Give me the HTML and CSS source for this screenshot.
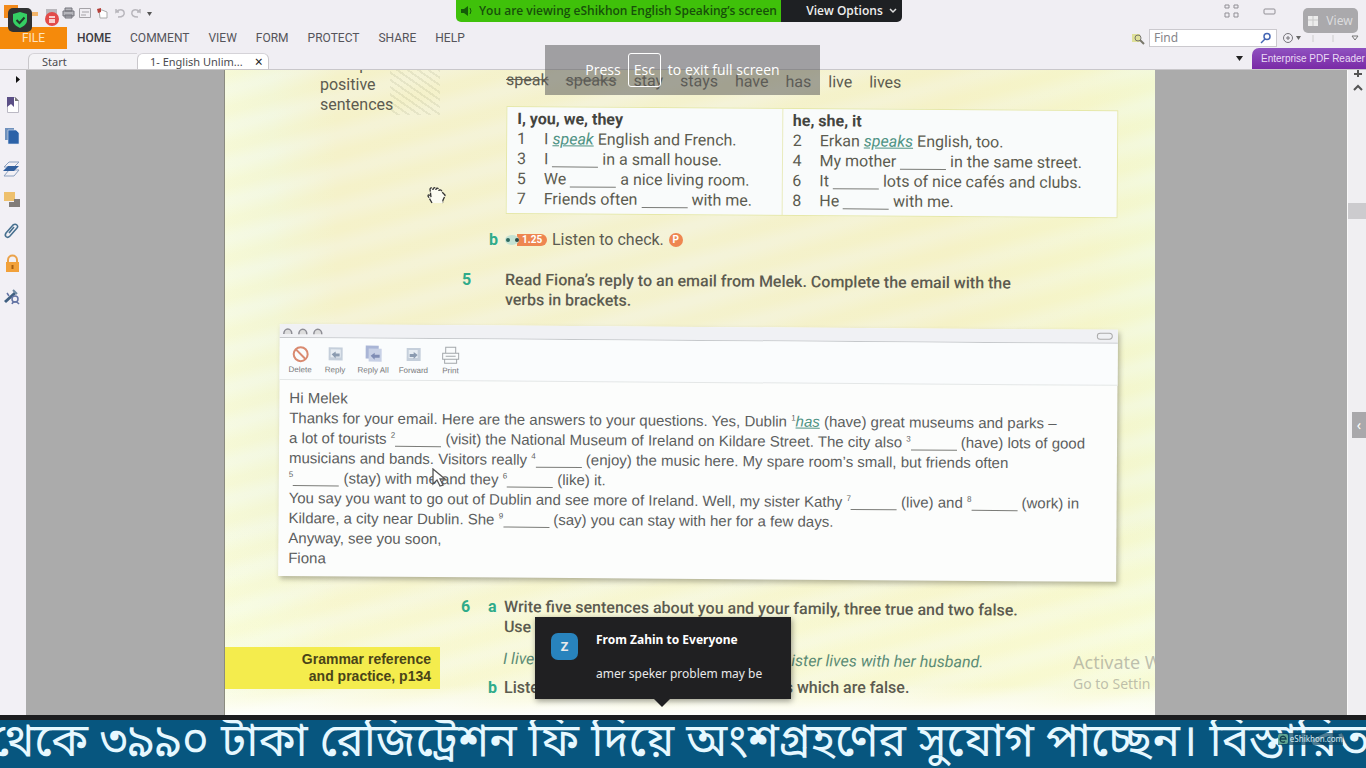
FILE: index.html
```html
<!DOCTYPE html>
<html lang="en">
<head>
<meta charset="utf-8">
<title>English Unlimited - PDF Reader</title>
<link rel="stylesheet" href="styles.css">
</head>
<body>
<header class="app-bar">
  <div class="quick">
    <svg class="quick-icons" width="156" height="26" viewBox="0 0 156 26" fill="none">
      <path d="M4 5h14v13H4z" fill="#f28a1c"/><path d="M32 12h6v4h-6z" fill="#f3b56b"/>
      <path d="M46 9h11v8H46z" fill="#b9b7bc"/><path d="M65 11h7V8h-7zM63 11h11v5H63zM65 15h7v3h-7z" stroke="#75757c" fill="#b5b5bb"/>
      <path d="M79.500 8.500h11v9h-11z" stroke="#a5a3a8"/><path d="M82 12h7M81 15h5" stroke="#a5a3a8"/>
      <path d="M99 10h3l5 2v6h-7z" stroke="#aaa" fill="#fff"/><path d="M97 9l4-1v4l-3 1z" fill="#b5403a"/>
      <path d="M118 17c5 0 7-2 6-5s-5-3-8 0v-3M116 12h3" stroke="#b8b6bc" stroke-width="1.500"/>
      <path d="M138 17c-5 0-7-2-6-5s5-3 8 0v-3M140 12h-3" stroke="#b8b6bc" stroke-width="1.500"/>
      <path d="M147 12h5l-2.500 4z" fill="#555"/>
    </svg>
    <svg class="window-icons" width="150" height="26" viewBox="0 0 150 26" fill="none" stroke="#918f95">
      <path d="M9 5h4v3H9zM18 5h4v3h-4zM9 13h4v4H9zM18 13h4v4h-4z"/><rect x="48" y="9" width="11" height="5" rx="1"/>
    </svg>
  </div>
  <div class="menu-row">
    <nav class="menu">
      <button class="file">FILE</button>
      <button class="current">HOME</button><button>COMMENT</button><button>VIEW</button><button>FORM</button><button>PROTECT</button><button>SHARE</button><button>HELP</button>
    </nav>
    <div class="search">
      <svg width="14" height="16" viewBox="0 0 14 16" fill="none"><path d="M1 4h8v8H1z" fill="#dfe09a"/><circle cx="7" cy="8" r="3" stroke="#77766a"/><path d="M9 10l4 4" stroke="#77766a" stroke-width="2"/></svg>
      <label class="find"><input type="text" placeholder="Find" aria-label="Find">
        <svg width="12" height="12" viewBox="0 0 12 12" fill="none" stroke="#4466b4" stroke-width="1.500"><circle cx="7" cy="4.500" r="3"/><path d="M5 7L1 11"/></svg></label>
      <svg width="85" height="16" viewBox="0 0 85 16" fill="none"><circle cx="7" cy="8" r="4.500" stroke="#77757b"/><path d="M5 8h4M7 6v4" stroke="#77757b"/><path d="M15 6h5l-2.500 4z" fill="#666"/><path d="M32 5v7M52 5v7" stroke="#ccc"/><path d="M71 6h6l-3 4z" stroke="#777"/></svg>
    </div>
  </div>
  <div class="tab-row">
    <button class="tab">Start</button>
    <button class="tab active"><span>1- English Unlim...</span><span class="close">×</span></button>
    <svg class="drop" width="8" height="6" viewBox="0 0 8 6"><path d="M0 0h7L3.500 5z" fill="#222"/></svg>
    <a class="edition" href="#">Enterprise PDF Reader</a>
  </div>
</header>

<main class="work">
  <aside class="tools">
    <svg width="26" height="240" viewBox="0 0 26 240" fill="none">
      <path d="M16 6l4 3.500-4 3.500z" fill="#111"/>
      <path d="M7.500 27.500h8l3 3v12h-11z" fill="#fff" stroke="#bbb9c4"/><path d="M7 27h7v10l-3-3-4 3z" fill="#5b4f86"/><path d="M15 27l4 4h-4z" fill="#777"/>
      <path d="M5 58h9v12H5z" fill="#6f91bd"/><path d="M8 60h8l3 3v11H8z" fill="#2c62a8" stroke="#dfe8f3" stroke-width=".6"/>
      <path d="M9 92h10l-5 5H4zM9 100h10l-5 6H4z" stroke="#8ba0bf"/><path d="M8 96h11l-5 5H3z" fill="#315f9e"/>
      <path d="M4 122h11v9H4z" fill="#eec06d"/><path d="M14 129h6v8H9v-5h5z" fill="#827d79"/>
      <path d="M6 163l7-8c3-2 6 1 4 3l-7 8c-3 3-6 0-4-3zm3 0l5-6" stroke="#47708f" stroke-width="1.600"/>
      <path d="M8 193v-3c0-6 9-6 9 0v3" stroke="#eaa24a" stroke-width="2"/><path d="M6 192h13v10H6z" fill="#f2a13a"/><path d="M12.500 195v4" stroke="#a85f10" stroke-width="2"/>
      <path d="M5 232l10-9" stroke="#3f5f80" stroke-width="3"/><path d="M13 220l4 4" stroke="#6d88a2" stroke-width="2"/><circle cx="15" cy="229" r="3" stroke="#6474a4" stroke-width="1.500"/><path d="M9 226l-2-3M12 234c1-3 5-3 7 0" stroke="#6474a4" stroke-width="1.500"/>
    </svg>
  </aside>
  <div class="canvas">
    <article class="paper">
      <section class="top">
        <p class="note">examples<br>positive<br>sentences</p>
        <div class="words tilt"><s>speak</s><s>speaks</s><span>stay</span><span>stays</span><span>have</span><span>has</span><span>live</span><span>lives</span></div>
      </section>
      <section class="verbs tilt">
        <div class="verb-col">
          <h2>I, you, we, they</h2>
          <ol>
            <li><b>1</b><span>I <em>speak</em> English and French.</span></li>
            <li><b>3</b><span>I <i class="blank"></i> in a small house.</span></li>
            <li><b>5</b><span>We <i class="blank"></i> a nice living room.</span></li>
            <li><b>7</b><span>Friends often <i class="blank"></i> with me.</span></li>
          </ol>
        </div>
        <div class="verb-col">
          <h2>he, she, it</h2>
          <ol>
            <li><b>2</b><span>Erkan <em>speaks</em> English, too.</span></li>
            <li><b>4</b><span>My mother <i class="blank"></i> in the same street.</span></li>
            <li><b>6</b><span>It <i class="blank"></i> lots of nice cafés and clubs.</span></li>
            <li><b>8</b><span>He <i class="blank"></i> with me.</span></li>
          </ol>
        </div>
      </section>
      <section class="task listen">
        <span class="num"></span><b class="letter">b</b>
        <p><span class="track"><svg width="14" height="12" viewBox="0 0 14 12"><ellipse cx="7" cy="6" rx="7" ry="5" fill="#c4e2d3"/><circle cx="3" cy="6" r="2" fill="#2f6a60"/><circle cx="12" cy="6" r="2" fill="#2f4a44"/></svg>1.25</span> Listen to check. <span class="p-mark">P</span></p>
      </section>
      <section class="task five">
        <b class="num">5</b><span class="letter"></span>
        <p class="tilt">Read Fiona’s reply to an email from Melek. Complete the email with the<br>verbs in brackets.</p>
      </section>
      <section class="mail tilt">
        <div class="mail-title">
          <svg width="44" height="10" viewBox="0 0 44 10" fill="#ddd" stroke="#8d8d94" stroke-width="1.500"><path d="M2 9a4 5 0 0 1 8 0M17 9a4 5 0 0 1 8 0M32 9a4 5 0 0 1 8 0"/></svg>
          <span class="pill"></span>
        </div>
        <div class="mail-tools">
          <span><svg width="20" height="20" viewBox="0 0 20 20" fill="none" stroke="#d98a70" stroke-width="2"><circle cx="10" cy="10" r="7"/><path d="M5 5l10 10"/></svg>Delete</span>
          <span><svg width="20" height="20" viewBox="0 0 20 20"><path d="M3 3h14v13H3z" fill="#c5cfdb"/><path d="M5 5h10v8H5z" fill="#e6ecf2"/><path d="M6 10l4-3v2h4v3h-4v2z" fill="#8b9bb0"/></svg>Reply</span>
          <span><svg width="20" height="20" viewBox="0 0 20 20"><path d="M2 1h13v13H2z" fill="#a9b5d6"/><path d="M5 4h13v13H5z" fill="#c8d1e6"/><path d="M7 11l4-3v2h5v3h-5v2z" fill="#7f8db5"/></svg>Reply All</span>
          <span><svg width="20" height="20" viewBox="0 0 20 20"><path d="M3 3h14v13H3z" fill="#c5cfdb"/><path d="M5 5h9v8H5z" fill="#e6ecf2"/><path d="M14 10l-4-3v2H6v3h4v2z" fill="#8b9bb0"/></svg>Forward</span>
          <span><svg width="20" height="20" viewBox="0 0 20 20" fill="none" stroke="#a3a7ab"><path d="M5 8V2h10v6M2 8h16v6H2zM4 14v4h12v-4M5 11h10" /></svg>Print</span>
        </div>
        <div class="mail-body">
          <p>Hi Melek</p>
          <p>Thanks for your email. Here are the answers to your questions. Yes, Dublin <sup>1</sup><em>has</em> (have) great museums and parks –</p>
          <p>a lot of tourists <sup>2</sup><i class="blank"></i> (visit) the National Museum of Ireland on Kildare Street. The city also <sup>3</sup><i class="blank"></i> (have) lots of good</p>
          <p>musicians and bands. Visitors really <sup>4</sup><i class="blank"></i> (enjoy) the music here. My spare room’s small, but friends often</p>
          <p><sup>5</sup><i class="blank"></i> (stay) with me and they <sup>6</sup><i class="blank"></i> (like) it.</p>
          <p>You say you want to go out of Dublin and see more of Ireland. Well, my sister Kathy <sup>7</sup><i class="blank"></i> (live) and <sup>8</sup><i class="blank"></i> (work) in</p>
          <p>Kildare, a city near Dublin. She <sup>9</sup><i class="blank"></i> (say) you can stay with her for a few days.</p>
          <p>Anyway, see you soon,</p>
          <p>Fiona</p>
        </div>
      </section>
      <section class="last">
        <a class="grammar" href="#">Grammar reference<br>and practice, p134</a>
        <div class="six">
          <div class="task"><b class="num">6</b><b class="letter">a</b><p class="tilt">Write five sentences about you and your family, three true and two false.<br>Use</p></div>
          <div class="example tilt"><span>I live</span><span>ister lives with her husband.</span></div>
          <div class="task"><span class="num"></span><b class="letter">b</b><p class="split"><span>Listen</span><span>s which are false.</span></p></div>
        </div>
      </section>
    </article>
    <div class="activate"><p>Activate W</p><p>Go to Settin</p></div>
  </div>
  <div class="scroll">
    <svg width="19" height="24" viewBox="0 0 19 24" fill="none" stroke="#555" stroke-width="2"><path d="M6 4h8M10 0v7M6 20l4-4 4 4"/></svg>
    <div class="thumb"></div>
    <button class="panel-toggle" aria-label="Open panel">‹</button>
  </div>
</main>

<footer class="ticker"><p lang="bn">থেকে ৩৯৯০ টাকা রেজিট্রেশন ফি দিয়ে অংশগ্রহণের সুযোগ পাচ্ছেন। বিস্তারিত</p>
  <div class="brand"><svg width="10" height="10" viewBox="0 0 10 10" fill="none"><rect width="10" height="10" rx="2" fill="#5fa592"/><path d="M2 5h6a3 3 0 1 0-1 2.500" stroke="#123f4f" stroke-width="1.300"/></svg>eShikhon.com</div>
</footer>

<div class="share-bar">
  <div class="sharing"><svg width="14" height="12" viewBox="0 0 14 12"><path d="M1 4h3l4-3v10L4 8H1z" fill="#145c08"/><path d="M10 3q2 3 0 6" stroke="#145c08" fill="none"/></svg>You are viewing eShikhon English Speaking’s screen</div>
  <button class="options">View Options <svg width="8" height="6" viewBox="0 0 8 6" fill="none" stroke="#ddd" stroke-width="1.500"><path d="M1 1l3 3 3-3"/></svg></button>
</div>
<svg class="shield" width="25" height="25" viewBox="0 0 25 25"><rect width="24" height="24" rx="5" fill="#303132"/><path d="M12 4l7 2v6c0 4-3 6-7 8-4-2-7-4-7-8V6z" fill="#35cf63"/><path d="M8.500 12l3 3 5-5.500" fill="none" stroke="#213a29" stroke-width="2"/></svg>
<svg class="record" width="14" height="14" viewBox="0 0 14 14"><circle cx="7" cy="7" r="7" fill="#e24b49"/><path d="M4 4h6v2H4zM4 7h6v4H4z" fill="#f8cfcd"/></svg>
<button class="view"><svg width="12" height="12" viewBox="0 0 12 12"><path d="M0 1h10v10H0z" fill="#ececec"/><path d="M0 5h10M5 1v10" stroke="#c8c8c8"/></svg>View</button>
<div class="escape">Press <kbd>Esc</kbd> to exit full screen</div>
<svg class="hand" width="20" height="20" viewBox="0 0 20 20" fill="#fbfbf2" stroke="#333" stroke-width="1.300"><path d="M5 18L1 11c0-2 2-1 3 1L3 4c1-2 3-1 3 1 0-3 3-3 3 0 0-3 3-2 3 1 0-2 3-1 3 1l3 3c0 3-3 4-2 8" stroke-dasharray="5 1"/></svg>
<svg class="arrow" width="14" height="20" viewBox="0 0 14 20" fill="#fff" stroke="#555" stroke-width="1.300"><path d="M1 1v15l4-4 3 6 3-1-3-6h5z"/></svg>
<div class="toast"><span class="avatar">Z</span><div><strong>From Zahin to Everyone</strong><p>amer speker problem may be</p></div></div>
</body>
</html>
```
FILE: styles.css
```css
* { box-sizing: border-box; }
body { margin: 0; height: 100vh; display: flex; flex-direction: column; position: relative; overflow: hidden; background: #ababab; font-family: "Noto Sans", sans-serif; color: #55554f; }
p, h2, ol { margin: 0; padding: 0; }
ol { list-style: none; }
button { border: 0; background: none; padding: 0; font: inherit; color: inherit; }
svg { display: block; flex: none; }

.app-bar { flex: none; background: #f0eef3; border-bottom: 1px solid #c9c7ca; }
.quick { height: 27px; display: flex; justify-content: space-between; }
.menu-row { height: 22px; display: flex; justify-content: space-between; align-items: center; }
.menu { display: flex; gap: 19px; font: 12px/22px Roboto, sans-serif; color: #55545a; }
.menu .file { width: 67px; margin-right: -9px; background: #f58a0b; color: #ffe3bd; }
.menu .current { color: #3c3b40; font-weight: 500; }
.search { display: flex; align-items: center; gap: 4px; }
.find { display: flex; align-items: center; width: 128px; height: 18px; padding: 0 4px; background: #fff; border: 1px solid #cbc9ce; }
.find input { width: 100%; min-width: 0; border: 0; padding: 0; outline: 0; background: none; font: 12px/16px "Noto Sans", sans-serif; }
.find input::placeholder { color: #86858a; }
.tab-row { height: 20px; display: flex; align-items: flex-end; padding-left: 28px; font: 11px/16px "Noto Sans", sans-serif; color: #4c4b4f; }
.tab { width: 109px; height: 16px; padding-left: 13px; text-align: left; background: #f4f3f6; border-top: 1px solid #d5d3d8; border-left: 1px solid #c9c7cb; border-top-left-radius: 6px; }
.tab.active { width: 132px; padding-left: 12px; background: #fff; display: flex; gap: 12px; border-right: 1px solid #c9c7cb; border-top-right-radius: 6px; }
.close { font-size: 14px; color: #222; }
.drop { margin: 0 8px 7px auto; }
.edition { height: 21px; width: 114px; padding-left: 9px; background: linear-gradient(#8f52c0, #7a2aa6); color: #eadcf5; font: 10px/21px "Liberation Sans", sans-serif; text-decoration: none; white-space: nowrap; border-top-left-radius: 7px; }

.work { flex: 1; min-height: 0; display: flex; overflow: hidden; }
.tools { flex: none; width: 26px; background: #f2f0f5; }
.canvas { flex: 1; min-width: 0; position: relative; background: #ababab; display: grid; grid-template-columns: 198fr 931fr 192fr; overflow: hidden; }
.scroll { flex: none; width: 19px; background: #f0eff2; border-left: 1px solid #fafafa; display: flex; flex-direction: column; }
.thumb { height: 16px; margin-top: 109px; background: #cccbce; }
.panel-toggle { height: 26px; margin: 193px 0 0 4px; background: #a9a8ab; color: #fff; font-size: 14px; line-height: 20px; }

.paper { grid-column: 2; min-width: 0; overflow: hidden; white-space: nowrap; border-left: 1px solid #8b8b80; font: 16px/20px Roboto, sans-serif; color: #5c5b50;
  background:
    linear-gradient(180deg, transparent 615px, rgba(255,255,255,.9) 645px),
    repeating-linear-gradient(165deg, rgba(255,240,130,.1) 0 6px, rgba(255,255,255,.08) 18px 22px, rgba(255,240,130,.1) 36px),
    linear-gradient(180deg, transparent 440px, rgba(250,255,225,.55) 560px),
    linear-gradient(90deg, #f5fae0 0, #f2f7de 5%, #f4f2d2 12%, #f3f2d6 50%, #f4f2cf 78%, #f4f6d2 93%, #f2f9da 100%); }
.tilt { transform: rotate(0.4deg); transform-origin: 0 50%; }
.top { display: grid; grid-template-columns: 281px 1fr; height: 36px; }
.note { margin: -15px 0 0 95px; width: 120px; height: 60px; font-size: 16px; background: repeating-linear-gradient(35deg, transparent 0 4px, rgba(120,125,90,.12) 4px 6px) 70px 0 no-repeat; }
.words { display: flex; gap: 17px; }
.verbs { margin-left: 281px; width: 612px; height: 108px; display: flex; background: #f9fbfb; border: 1px solid #e6e8a9; }
.verb-col { padding: 2px 0 0 10px; width: 275px; }
.verb-col + .verb-col { width: 336px; border-left: 1px solid #e9ebbd; }
.verbs h2 { font: 700 16px/20px Roboto, sans-serif; color: #44443f; }
.verbs li { display: grid; grid-template-columns: 27px 1fr; }
.verbs b { font-weight: 400; }
em { color: #4f9384; text-decoration: underline; }
.blank { display: inline-block; width: 46px; border-bottom: 1px solid #7b7c78; vertical-align: -3px; }
.task { display: grid; grid-template-columns: 27px 16px 1fr; font-weight: 500; }
.num, .letter { color: #2fab8a; font-weight: 700; }
.listen, .five { margin-left: 237px; }
.listen { margin-top: 16px; }
.listen p { display: flex; align-items: center; gap: 5px; font-weight: 400; }
.track { width: 42px; display: flex; gap: 3px; border-radius: 6px; background: linear-gradient(90deg, transparent 12px, #ee8650 12px); color: #fff; font: 700 10px/12px Roboto, sans-serif; }
.p-mark { width: 14px; height: 14px; border-radius: 7px; background: #ee8650; color: #fff; font: 700 10px/14px Roboto, sans-serif; text-align: center; }
.five { margin-top: 20px; }

.mail { margin: 14px 0 0 54px; width: 838px; height: 252px; background: #fcfdfc; box-shadow: 2px 3px 5px rgba(100,100,80,.45); }
.mail-title { height: 14px; padding: 1px 5px 0 2px; display: flex; justify-content: space-between; align-items: flex-start; background: #f0f1f4; border-bottom: 1px solid #c5c8cb; }
.pill { width: 16px; height: 7px; margin-top: 2px; border: 1px solid #aaa; border-radius: 4px; }
.mail-tools { height: 42px; padding: 6px 8px 0; display: flex; gap: 10px; border-bottom: 1px solid #e4e7e7; font: 8px/12px "Liberation Sans", sans-serif; color: #77787a; background: #fafcfd; }
.mail-tools span { display: flex; flex-direction: column; align-items: center; min-width: 25px; }
.mail-body { padding: 8px 10px; font: 15px/20px "Liberation Sans", sans-serif; color: #5d5f5f; }
.mail-body sup { font-size: 8px; line-height: 0; vertical-align: 6px; }

.last { display: grid; grid-template-columns: 215px 1fr; margin-top: 21px; }
.grammar { align-self: start; margin-top: 50px; padding: 4px 9px 4px 0; height: 42px; background: #f4ec4d; color: #4a4418; text-align: right; text-decoration: none; font: 700 14px/17px "Liberation Sans", sans-serif; }
.six { padding-left: 21px; }
.example { display: flex; gap: 257px; margin: 12px 0 9px 42px; font-style: italic; color: #5c8c76; }
.split { display: flex; gap: 237px; }
.activate { position: absolute; left: 1047px; top: 580px; width: 82px; overflow: hidden; white-space: nowrap; font: 18px/24px "Noto Sans", sans-serif; color: rgba(150,150,140,.6); }
.activate p + p { font-size: 14px; line-height: 20px; }

.ticker { position: relative; flex: none; height: 53px; overflow: hidden; background: #07567f; border-top: 5px solid #1c1d1f; color: #e6f8ff; }
.ticker p { margin-left: -10px; white-space: nowrap; font: 46px/50px "Noto Sans Bengali", "Noto Sans", sans-serif; }
.brand { position: absolute; right: 23px; bottom: 23px; display: flex; gap: 2px; align-items: center; background: rgba(10,70,100,.7); color: #d5e8ee; font: 8px/12px "Noto Sans", sans-serif; }

.share-bar { position: absolute; left: 456px; top: 0; display: flex; height: 22px; border-radius: 0 0 5px 5px; overflow: hidden; font: 600 12px/22px "Open Sans", sans-serif; white-space: nowrap; }
.sharing { width: 325px; padding-left: 4px; display: flex; align-items: center; gap: 5px; background: #3fc10a; color: #17500a; }
.options { width: 121px; padding-left: 20px; display: flex; align-items: center; justify-content: center; gap: 6px; background: #1e2023; color: #eee; }
.shield { position: absolute; left: 8px; top: 8px; }
.record { position: absolute; left: 45px; top: 12px; }
.view { position: absolute; right: 8px; top: 8px; width: 55px; height: 25px; border-radius: 5px; background: #aaa9ac; color: #dcdcde; display: flex; align-items: center; justify-content: center; gap: 6px; font-size: 12px; }
.escape { position: absolute; left: 50%; top: 45px; width: 275px; height: 50px; margin-left: -138px; display: flex; align-items: center; justify-content: center; gap: 7px; background: rgba(93,93,93,.54); color: #fff; font: 14px/20px "Open Sans", sans-serif; white-space: nowrap; }
.escape kbd { padding: 6px 5px; border: 1px solid #fff; border-radius: 3px; font: inherit; }
.hand { position: absolute; left: 427px; top: 185px; }
.arrow { position: absolute; left: 432px; top: 468px; }
.toast { position: absolute; left: 535px; bottom: 69px; width: 256px; height: 82px; padding: 14px 16px; display: flex; gap: 18px; background: #202022; color: #e9e9ea; font: 12px/18px "Noto Sans", sans-serif; box-shadow: 1px 2px 6px rgba(0,0,0,.4); white-space: nowrap; }
.toast::after { content: ""; position: absolute; left: 119px; top: 100%; border: 8px solid transparent; border-top-color: #202022; border-bottom: 0; }
.toast strong { font-size: 12px; color: #fff; }
.toast p { margin-top: 16px; }
.avatar { width: 27px; height: 27px; border-radius: 7px; background: #2883bd; text-align: center; font: 700 13px/27px "Noto Sans", sans-serif; margin-top: 2px; }
```
